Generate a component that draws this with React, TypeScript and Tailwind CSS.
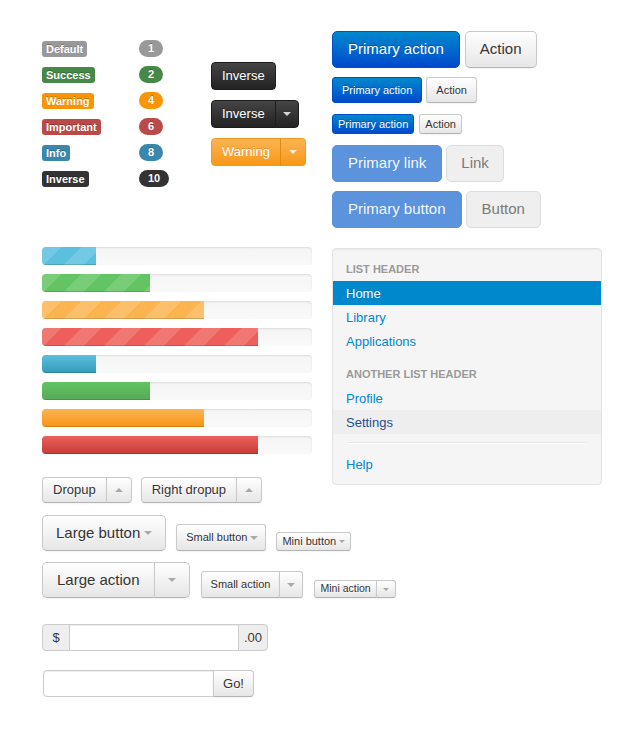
import clsx from "clsx"

const btnDefault =
  "border border-[#c9c9c9] border-b-[#b3b3b3] bg-linear-to-b from-white to-[#e6e6e6] text-[#333] shadow-[inset_0_1px_0_rgba(255,255,255,0.2),0_1px_2px_rgba(0,0,0,0.05)] [text-shadow:0_1px_1px_rgba(255,255,255,0.75)]"
const btnPrimary =
  "border border-[#0050c8] bg-linear-to-b from-[#0088cc] to-[#0048cc] text-white [text-shadow:0_-1px_0_rgba(0,0,0,0.25)]"
const btnInverse =
  "border border-[#1c1c1c] bg-linear-to-b from-[#454545] to-[#232323] text-white [text-shadow:0_-1px_0_rgba(0,0,0,0.25)]"
const btnWarning =
  "border border-[#f39a22] bg-linear-to-b from-[#fbb450] to-[#f8980f] text-white [text-shadow:0_-1px_0_rgba(0,0,0,0.15)]"

const stripes =
  "bg-[linear-gradient(135deg,rgba(255,255,255,0.15)_25%,transparent_25%,transparent_50%,rgba(255,255,255,0.15)_50%,rgba(255,255,255,0.15)_75%,transparent_75%,transparent)] bg-[length:40px_40px]"

const labels = [
  { text: "Default", color: "bg-[#999]" },
  { text: "Success", color: "bg-[#468847]" },
  { text: "Warning", color: "bg-[#f89406]" },
  { text: "Important", color: "bg-[#b94a48]" },
  { text: "Info", color: "bg-[#3a87ad]" },
  { text: "Inverse", color: "bg-[#333]" },
]

const badges = [
  { text: "1", color: "bg-[#999]" },
  { text: "2", color: "bg-[#468847]" },
  { text: "4", color: "bg-[#f89406]" },
  { text: "6", color: "bg-[#b94a48]" },
  { text: "8", color: "bg-[#3a87ad]" },
  { text: "10", color: "bg-[#333]" },
]

const bars = [
  { width: "w-1/5", fill: clsx("bg-[#5bc0de]", stripes) },
  { width: "w-2/5", fill: clsx("bg-[#62c462]", stripes) },
  { width: "w-3/5", fill: clsx("bg-[#fbb450]", stripes) },
  { width: "w-4/5", fill: clsx("bg-[#ee5f5b]", stripes) },
  { width: "w-1/5", fill: "bg-linear-to-b from-[#5bc0de] to-[#339bb9]" },
  { width: "w-2/5", fill: "bg-linear-to-b from-[#62c462] to-[#57a957]" },
  { width: "w-3/5", fill: "bg-linear-to-b from-[#fbb450] to-[#f89406]" },
  { width: "w-4/5", fill: "bg-linear-to-b from-[#ee5f5b] to-[#c43c35]" },
]

const CaretDown = ({ small }: { small?: boolean }) => (
  <span
    className={clsx(
      "inline-block h-0 w-0 border-x-transparent border-t-black opacity-30",
      small ? "border-x-[3px] border-t-[3px]" : "border-x-4 border-t-4"
    )}
  />
)

const CaretUp = () => (
  <span className="inline-block h-0 w-0 border-x-4 border-b-4 border-x-transparent border-b-black opacity-30" />
)

const CaretWhite = () => (
  <span className="inline-block h-0 w-0 border-x-4 border-t-4 border-x-transparent border-t-white opacity-80" />
)

const NavHeader = ({ children, className }: { children: string; className?: string }) => (
  <div
    className={clsx(
      "h-6 px-[13px] text-[11px] font-bold uppercase leading-6 text-[#999] [text-shadow:0_1px_0_rgba(255,255,255,0.5)]",
      className
    )}
  >
    {children}
  </div>
)

const NavItem = ({ children, active, hover }: { children: string; active?: boolean; hover?: boolean }) => (
  <a
    className={clsx(
      "block h-6 px-[13px] pt-px text-[13px] leading-6",
      active && "bg-[#0088cc] text-white [text-shadow:0_-1px_0_rgba(0,0,0,0.2)]",
      hover && "bg-[#eee] text-[#1d4f91]",
      !active && !hover && "text-[#0088cc]"
    )}
  >
    {children}
  </a>
)

const App = () => {
  return (
    <div className="min-h-[730px] bg-white pl-[42px] pt-[31px] font-['Liberation_Sans',Arial,sans-serif] text-[#333]">
      {/* labels, badges, buttons */}
      <div className="flex items-start">
        <div className="mt-[10px] flex w-[97px] flex-col items-start gap-[10px]">
          {labels.map((l) => (
            <span
              key={l.text}
              className={clsx(
                "inline-flex h-4 items-center rounded-[3px] px-1 text-[11px] font-bold leading-none text-white [text-shadow:0_-1px_0_rgba(0,0,0,0.25)]",
                l.color
              )}
            >
              {l.text}
            </span>
          ))}
        </div>
        <div className="mt-[9px] flex w-[72px] flex-col items-start gap-[9px]">
          {badges.map((b) => (
            <span
              key={b.text}
              className={clsx(
                "inline-flex h-[17px] items-center rounded-full px-[9px] text-[11px] font-bold leading-none text-white [text-shadow:0_-1px_0_rgba(0,0,0,0.25)]",
                b.color
              )}
            >
              {b.text}
            </span>
          ))}
        </div>
        <div className="mt-[31px] flex w-[121px] flex-col items-start gap-[10px]">
          <button type="button" className={clsx("h-7 rounded-[4px] px-[10px] text-[13px]", btnInverse)}>
            Inverse
          </button>
          <div className="flex h-7">
            <button type="button" className={clsx("rounded-l-[4px] px-[10px] text-[13px]", btnInverse)}>
              Inverse
            </button>
            <button type="button" className={clsx("-ml-px flex items-center rounded-r-[4px] px-[7px]", btnInverse)}>
              <CaretWhite />
            </button>
          </div>
          <div className="flex h-7">
            <button type="button" className={clsx("rounded-l-[4px] px-[10px] text-[13px]", btnWarning)}>
              Warning
            </button>
            <button
              type="button"
              className={clsx("-ml-px flex items-center rounded-r-[4px] border-l-[#e08a10] px-2", btnWarning)}
            >
              <CaretWhite />
            </button>
          </div>
        </div>
        <div className="flex flex-col">
          <div className="flex h-[37px] gap-[5px]">
            <button type="button" className={clsx("rounded-[5px] px-[15px] text-[15px]", btnPrimary)}>
              Primary action
            </button>
            <button type="button" className={clsx("rounded-[5px] px-[14px] text-[15px]", btnDefault)}>
              Action
            </button>
          </div>
          <div className="mt-[9px] flex h-[26px] gap-1">
            <button type="button" className={clsx("rounded-[3px] px-[9px] text-[11px]", btnPrimary)}>
              Primary action
            </button>
            <button type="button" className={clsx("rounded-[3px] px-[9px] text-[11px]", btnDefault)}>
              Action
            </button>
          </div>
          <div className="mt-[11px] flex h-5 gap-[5px]">
            <button type="button" className={clsx("rounded-[3px] px-[5px] text-[11px]", btnPrimary)}>
              Primary action
            </button>
            <button type="button" className={clsx("rounded-[3px] px-[5px] text-[11px]", btnDefault)}>
              Action
            </button>
          </div>
          <div className="mt-[11px] flex h-[37px] gap-1">
            <a className="flex items-center rounded-[5px] border border-[#5a91dc] bg-[#5b93dd] px-[15px] text-[15px] text-white/95">
              Primary link
            </a>
            <a className="flex items-center rounded-[5px] border border-[#dcdcdc] bg-[#efefef] px-[14px] text-[15px] text-[#7a7a7a]">
              Link
            </a>
          </div>
          <div className="mt-[9px] flex h-[37px] gap-1">
            <button
              type="button"
              className="rounded-[5px] border border-[#5a91dc] bg-[#5b93dd] px-[15px] text-[15px] text-white/95"
            >
              Primary button
            </button>
            <button
              type="button"
              className="rounded-[5px] border border-[#dcdcdc] bg-[#efefef] px-[15px] text-[15px] text-[#7a7a7a]"
            >
              Button
            </button>
          </div>
        </div>
      </div>

      {/* progress bars, dropups, nav list */}
      <div className="mt-[19px] flex items-start">
        <div className="w-[290px]">
          <div className="flex flex-col gap-[9px]">
            {bars.map((b, i) => (
              <div
                key={i}
                className="h-[18px] w-[270px] overflow-hidden rounded-[4px] bg-linear-to-b from-[#f5f5f5] to-[#f9f9f9] shadow-[inset_0_1px_2px_rgba(0,0,0,0.1)]"
              >
                <div className={clsx("h-full shadow-[inset_0_-1px_0_rgba(0,0,0,0.15)]", b.width, b.fill)} />
              </div>
            ))}
          </div>
          <div className="mt-[23px] flex gap-[9px]">
            <div className="flex h-[26px]">
              <button type="button" className={clsx("rounded-l-[4px] px-[10px] text-[13px]", btnDefault)}>
                Dropup
              </button>
              <button type="button" className={clsx("-ml-px flex items-center rounded-r-[4px] px-2", btnDefault)}>
                <CaretUp />
              </button>
            </div>
            <div className="flex h-[26px]">
              <button type="button" className={clsx("rounded-l-[4px] px-[10px] text-[13px]", btnDefault)}>
                Right dropup
              </button>
              <button type="button" className={clsx("-ml-px flex items-center rounded-r-[4px] px-2", btnDefault)}>
                <CaretUp />
              </button>
            </div>
          </div>
        </div>

        <div className="mt-px w-[270px] rounded-[4px] border border-[#e3e3e3] bg-[#f5f5f5] pb-2 pt-2 shadow-[inset_0_1px_1px_rgba(0,0,0,0.05)]">
          <NavHeader>List header</NavHeader>
          <NavItem active>Home</NavItem>
          <NavItem>Library</NavItem>
          <NavItem>Applications</NavItem>
          <NavHeader className="mt-[9px]">Another list header</NavHeader>
          <NavItem>Profile</NavItem>
          <NavItem hover>Settings</NavItem>
          <div className="mx-[15px] my-2 h-[2px] border-b border-b-white bg-[#e5e5e5]" />
          <div className="mt-[8px]">
            <NavItem>Help</NavItem>
          </div>
        </div>
      </div>

      {/* button sizes */}
      <div className="mt-[12px] flex items-end gap-[10px]">
        <button type="button" className={clsx("flex h-9 items-center gap-1 rounded-[5px] pl-[13px] pr-[13px] text-[15px]", btnDefault)}>
          Large button <CaretDown />
        </button>
        <button type="button" className={clsx("flex h-[27px] items-center gap-[3px] rounded-[3px] pl-[9px] pr-[7px] text-[11px]", btnDefault)}>
          Small button <CaretDown />
        </button>
        <button type="button" className={clsx("flex h-[19px] items-center gap-[3px] rounded-[3px] px-[5px] text-[11px]", btnDefault)}>
          Mini button <CaretDown small />
        </button>
      </div>

      <div className="mt-[11px] flex items-end gap-[11px]">
        <div className="flex h-9">
          <button type="button" className={clsx("rounded-l-[5px] px-[14px] text-[15px]", btnDefault)}>
            Large action
          </button>
          <button type="button" className={clsx("-ml-px flex items-center rounded-r-[5px] px-[13px]", btnDefault)}>
            <CaretDown />
          </button>
        </div>
        <div className="flex h-[27px]">
          <button type="button" className={clsx("rounded-l-[3px] px-[9px] text-[11px]", btnDefault)}>
            Small action
          </button>
          <button type="button" className={clsx("-ml-px flex items-center rounded-r-[3px] px-[7px]", btnDefault)}>
            <CaretDown />
          </button>
        </div>
        <div className="flex h-[18px]">
          <button type="button" className={clsx("rounded-l-[3px] px-[5px] text-[10.5px]", btnDefault)}>
            Mini action
          </button>
          <button type="button" className={clsx("-ml-px flex items-center rounded-r-[3px] px-[6px]", btnDefault)}>
            <CaretDown small />
          </button>
        </div>
      </div>

      {/* inputs */}
      <div className="mt-[26px] flex h-[27px] text-[13px]">
        <span className="flex w-[28px] items-center justify-center rounded-l-[4px] border border-[#ccc] bg-[#eee] [text-shadow:0_1px_0_#fff]">
          $
        </span>
        <input
          type="text"
          className="-ml-px w-[170px] border border-[#ccc] bg-white px-[6px] shadow-[inset_0_1px_1px_rgba(0,0,0,0.075)] outline-none"
        />
        <span className="-ml-px flex w-[30px] items-center justify-center rounded-r-[4px] border border-[#ccc] bg-[#eee] [text-shadow:0_1px_0_#fff]">
          .00
        </span>
      </div>

      <div className="ml-px mt-[19px] flex h-[27px] text-[13px]">
        <input
          type="text"
          className="w-[171px] rounded-l-[4px] border border-[#ccc] bg-white px-[6px] shadow-[inset_0_1px_1px_rgba(0,0,0,0.075)] outline-none"
        />
        <button type="button" className={clsx("-ml-px w-[41px] rounded-r-[4px] text-[13px]", btnDefault)}>
          Go!
        </button>
      </div>
    </div>
  )
}

export default App
